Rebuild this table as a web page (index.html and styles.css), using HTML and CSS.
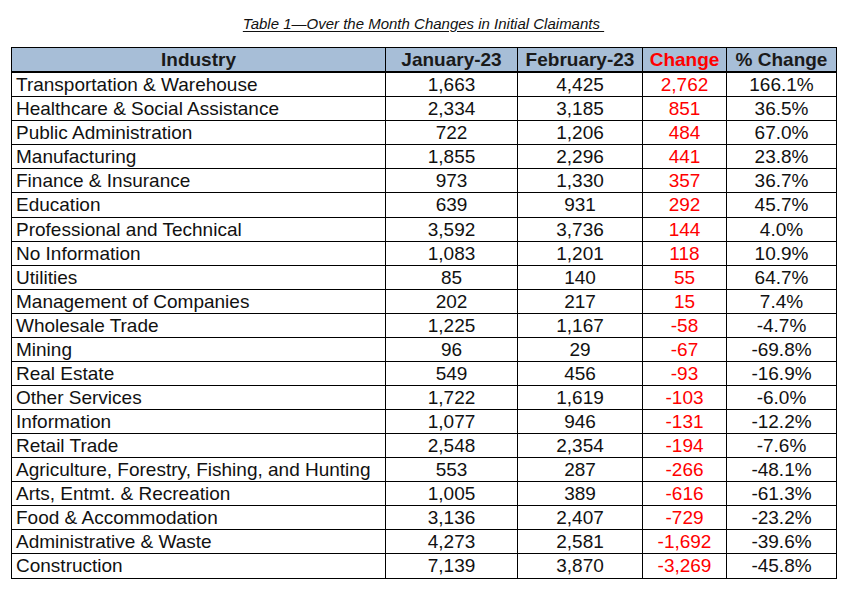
FILE: index.html
```html
<!DOCTYPE html>
<html>
<head>
<meta charset="utf-8">
<link rel="stylesheet" href="styles.css">
</head>
<body>
<div class="page">
  <div class="title"><span>Table 1—Over the Month Changes in Initial Claimants&nbsp;</span></div>
  <table class="claims">
    <colgroup>
      <col class="c-ind"><col class="c-jan"><col class="c-feb"><col class="c-chg"><col class="c-pct">
    </colgroup>
    <thead>
      <tr><th>Industry</th><th>January-23</th><th>February-23</th><th class="red">Change</th><th>% Change</th></tr>
    </thead>
    <tbody>
      <tr><td>Transportation &amp; Warehouse</td><td>1,663</td><td>4,425</td><td class="red">2,762</td><td>166.1%</td></tr>
      <tr><td>Healthcare &amp; Social Assistance</td><td>2,334</td><td>3,185</td><td class="red">851</td><td>36.5%</td></tr>
      <tr><td>Public Administration</td><td>722</td><td>1,206</td><td class="red">484</td><td>67.0%</td></tr>
      <tr><td>Manufacturing</td><td>1,855</td><td>2,296</td><td class="red">441</td><td>23.8%</td></tr>
      <tr><td>Finance &amp; Insurance</td><td>973</td><td>1,330</td><td class="red">357</td><td>36.7%</td></tr>
      <tr class="tall"><td>Education</td><td>639</td><td>931</td><td class="red">292</td><td>45.7%</td></tr>
      <tr><td>Professional and Technical</td><td>3,592</td><td>3,736</td><td class="red">144</td><td>4.0%</td></tr>
      <tr><td>No Information</td><td>1,083</td><td>1,201</td><td class="red">118</td><td>10.9%</td></tr>
      <tr><td>Utilities</td><td>85</td><td>140</td><td class="red">55</td><td>64.7%</td></tr>
      <tr><td>Management of Companies</td><td>202</td><td>217</td><td class="red">15</td><td>7.4%</td></tr>
      <tr><td>Wholesale Trade</td><td>1,225</td><td>1,167</td><td class="red">-58</td><td>-4.7%</td></tr>
      <tr><td>Mining</td><td>96</td><td>29</td><td class="red">-67</td><td>-69.8%</td></tr>
      <tr><td>Real Estate</td><td>549</td><td>456</td><td class="red">-93</td><td>-16.9%</td></tr>
      <tr><td>Other Services</td><td>1,722</td><td>1,619</td><td class="red">-103</td><td>-6.0%</td></tr>
      <tr><td>Information</td><td>1,077</td><td>946</td><td class="red">-131</td><td>-12.2%</td></tr>
      <tr><td>Retail Trade</td><td>2,548</td><td>2,354</td><td class="red">-194</td><td>-7.6%</td></tr>
      <tr><td>Agriculture, Forestry, Fishing, and Hunting</td><td>553</td><td>287</td><td class="red">-266</td><td>-48.1%</td></tr>
      <tr><td>Arts, Entmt. &amp; Recreation</td><td>1,005</td><td>389</td><td class="red">-616</td><td>-61.3%</td></tr>
      <tr><td>Food &amp; Accommodation</td><td>3,136</td><td>2,407</td><td class="red">-729</td><td>-23.2%</td></tr>
      <tr><td>Administrative &amp; Waste</td><td>4,273</td><td>2,581</td><td class="red">-1,692</td><td>-39.6%</td></tr>
      <tr class="tall"><td>Construction</td><td>7,139</td><td>3,870</td><td class="red">-3,269</td><td>-45.8%</td></tr>
    </tbody>
  </table>
</div>
</body>
</html>
```

FILE: styles.css
```css
html, body {
  margin: 0;
  padding: 0;
  background: #ffffff;
}

.page {
  width: 825px;
  padding: 15px 0 0 11px;
  font-family: "Liberation Sans", Arial, sans-serif;
  color: #111111;
}

.title {
  text-align: center;
  font-size: 15px;
  font-style: italic;
  line-height: 18px;
  height: 32px;
  color: #111111;
}

.title span {
  text-decoration: underline;
  text-underline-offset: 2px;
}

.claims {
  width: 825px;
  table-layout: fixed;
  border-collapse: collapse;
  font-size: 19px;
}

.c-ind { width: 374px; }
.c-jan { width: 132px; }
.c-feb { width: 125px; }
.c-chg { width: 84px; }
.c-pct { width: 110px; }

.claims th,
.claims td {
  border: 1px solid #000000;
  padding: 0;
  white-space: nowrap;
  text-align: center;
  vertical-align: middle;
  line-height: 20px;
}

.claims th {
  background: #a7bed7;
  font-weight: bold;
  font-size: 19px;
  height: 23px;
  color: #1a1a1a;
  border-bottom: 2px solid #000000;
}

.claims td {
  height: 23px;
}

.claims tr.tall td {
  height: 24px;
}

.claims td:first-child {
  text-align: left;
  padding-left: 4px;
}

.claims .red {
  color: #ff0000;
}
```
